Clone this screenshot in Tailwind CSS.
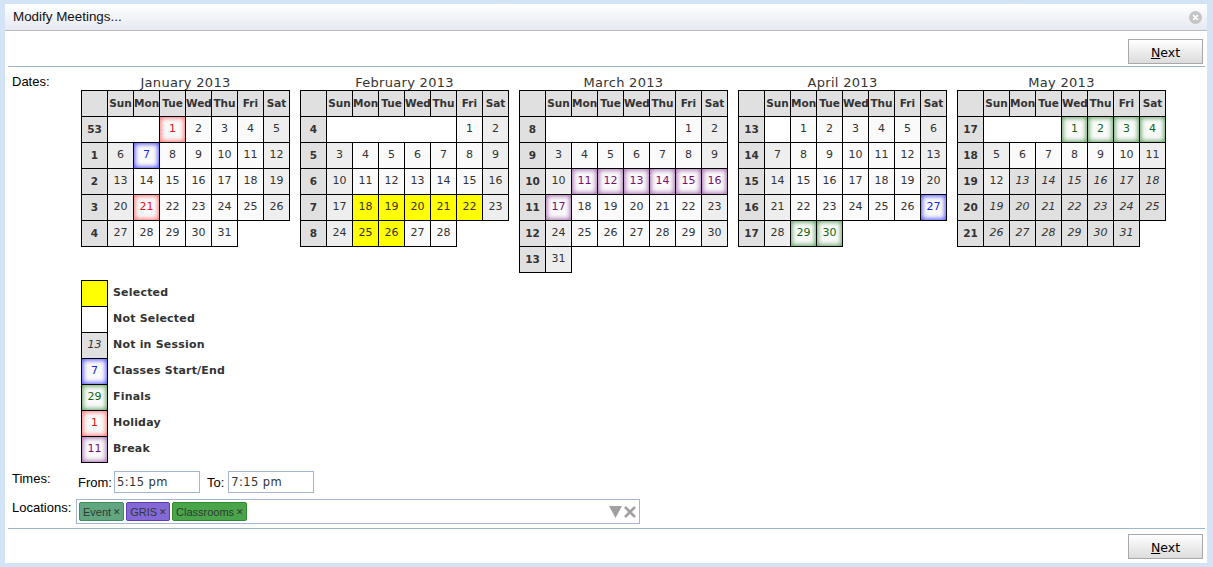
<!DOCTYPE html>
<html lang="en">
<head>
<meta charset="UTF-8" />
<title>Modify Meetings</title>
<script src="https://cdn.jsdelivr.net/npm/@tailwindcss/browser@4"></script>
</head>
<body class="bg-[#d2e4f6] font-['Liberation_Sans',sans-serif] text-[12px] text-black h-[567px] overflow-hidden">
<div class="ml-[5px] mr-[6px] pt-[4px]">
  <div class="bg-white h-[559px] flex flex-col">
    <div class="h-[27px] flex items-center justify-between pl-[8px] pr-[5px] border-b border-[#bcbcbc] bg-gradient-to-b from-white to-[#e6e9f2] text-[13.4px] text-[#111]">
      <span>Modify Meetings...</span>
      <svg class="w-[13px] h-[13px]" viewBox="0 0 13 13"><circle cx="6.5" cy="6.5" r="6.5" fill="#c4c4c4"/><path d="M4.2 4.2l4.6 4.6M8.8 4.2l-4.6 4.6" stroke="#fff" stroke-width="1.8"/></svg>
    </div>
    <div class="flex justify-end h-[36px] items-end pb-[2px] pr-[2px] ml-[3px] mr-[2px] border-b border-[#9db5d3]">
      <button class="w-[75px] h-[25px] pt-[3px] border border-[#a9a9a9] bg-gradient-to-b from-white to-[#dcdcdc] font-['DejaVu_Sans',sans-serif] text-[12.5px] text-black"><u>N</u>ext</button>
    </div>

    <div class="flex pl-[7px] mt-[7px] h-[207px]">
      <div class="w-[69px] text-[13px] leading-[15px] text-black">Dates:</div>
      <div id="calendars" class="flex gap-[10px] font-['DejaVu_Sans',sans-serif] items-start"></div>
    </div>

    <div class="ml-[76px] mt-[-1px] font-['DejaVu_Sans',sans-serif]">
      <table id="legend" class="border-collapse text-[11px] text-[#333]"></table>
    </div>

    <div class="flex pl-[7px] mt-[7px] h-[23px]">
      <div class="w-[66px] pt-[1px] text-[13px] leading-[15px] text-black">Times:</div>
      <div class="flex items-center text-[13px] h-[22px] mt-[1px]">
        <span class="mr-[2px] pt-[2px]">From:</span>
        <input value="5:15 pm" class="w-[86px] h-[22px] border border-[#a3b5d2] px-[2px] font-['DejaVu_Sans',sans-serif] text-[11.5px] tracking-[0.4px] text-[#333]" />
        <span class="ml-[7px] mr-[4px] pt-[2px]">To:</span>
        <input value="7:15 pm" class="w-[86px] h-[22px] border border-[#a3b5d2] px-[2px] font-['DejaVu_Sans',sans-serif] text-[11.5px] tracking-[0.4px] text-[#333]" />
      </div>
    </div>

    <div class="flex pl-[7px] mt-[6px]">
      <div class="w-[64px] pt-[1px] text-[13px] leading-[15px] text-black">Locations:</div>
      <div class="w-[564px] h-[25px] border border-[#a3b5d2] flex items-center gap-[2px] px-[2px] text-[11px] text-[#2f3a33]">
        <span class="h-[19px] pl-[3px] pr-[2px] pt-[1px] flex items-center gap-[2px] rounded-[2px] border border-[#3f8a5f] bg-[#62a581]">Event <span class="text-[9px] pt-[2px]">✕</span></span>
        <span class="h-[19px] pl-[3px] pr-[2px] pt-[1px] flex items-center gap-[2px] rounded-[2px] border border-[#5a40b5] bg-[#8469d6]">GRIS <span class="text-[9px] pt-[2px]">✕</span></span>
        <span class="h-[19px] pl-[3px] pr-[2px] pt-[1px] flex items-center gap-[2px] rounded-[2px] border border-[#2f8a30] bg-[#4aa44a]">Classrooms <span class="text-[9px] pt-[2px]">✕</span></span>
        <span class="ml-auto flex items-center gap-[2px] pr-[1px]">
          <svg class="w-[13px] h-[12px]" viewBox="0 0 13 12"><path d="M0 0h13L6.5 12z" fill="#a0a0a0"/></svg>
          <svg class="w-[12px] h-[12px]" viewBox="0 0 12 12"><path d="M1 1l10 10M11 1L1 11" stroke="#a0a0a0" stroke-width="2.6"/></svg>
        </span>
      </div>
    </div>

    <div class="flex justify-end pt-[5px] pr-[2px] ml-[3px] mr-[2px] mt-[4px] border-t border-[#9db5d3]">
      <button class="w-[75px] h-[25px] pt-[3px] border border-[#a9a9a9] bg-gradient-to-b from-white to-[#dcdcdc] font-['DejaVu_Sans',sans-serif] text-[12.5px] text-black"><u>N</u>ext</button>
    </div>
  </div>
</div>
<script>
const base = 'w-[26px] h-[26px] p-0 border border-black text-center text-[11px] text-[#333] font-normal';
const head = 'w-[26px] h-[26px] p-0 border border-black text-center text-[10.5px] text-[#333] font-bold bg-[#e0e0e0]';
const styles = {
  selected: 'bg-[#ffff00]',
  weekday: 'bg-[#fafafa]',
  weekend: 'bg-[#eeeeee]',
  off: 'bg-[#e0e0e0] italic',
  start: 'bg-[#fafafa] text-[#2222ee] shadow-[inset_0_0_5px_1px_#4a4aff]',
  finals: 'bg-[#fafafa] text-[#116611] shadow-[inset_0_0_5px_1px_#5c9f5c]',
  holiday: 'bg-[#fafafa] text-[#ee1111] shadow-[inset_0_0_5px_1px_#ff7070]',
  brk: 'bg-[#fafafa] text-[#771177] shadow-[inset_0_0_5px_1px_#a466ae]'
};
// marks: day -> kind, per month
const months = [
  { name: 'January 2013', first: 2, days: 31, weeks: [53, 1, 2, 3, 4], marks: { 1: 'holiday', 7: 'start', 21: 'holiday' } },
  { name: 'February 2013', first: 5, days: 28, weeks: [4, 5, 6, 7, 8], marks: { 18: 'selected', 19: 'selected', 20: 'selected', 21: 'selected', 22: 'selected', 25: 'selected', 26: 'selected' } },
  { name: 'March 2013', first: 5, days: 31, weeks: [8, 9, 10, 11, 12, 13], marks: { 11: 'brk', 12: 'brk', 13: 'brk', 14: 'brk', 15: 'brk', 16: 'brk', 17: 'brk' } },
  { name: 'April 2013', first: 1, days: 30, weeks: [13, 14, 15, 16, 17], marks: { 27: 'start', 29: 'finals', 30: 'finals' } },
  { name: 'May 2013', first: 3, days: 31, weeks: [17, 18, 19, 20, 21], marks: { 1: 'finals', 2: 'finals', 3: 'finals', 4: 'finals' }, offFrom: 13 }
];
const names = ['Sun', 'Mon', 'Tue', 'Wed', 'Thu', 'Fri', 'Sat'];

function calendar(m) {
  let html = '<div class="w-[209px]"><div class="text-center text-[13px] leading-[14px] h-[16px] pt-[2px] tracking-[0.3px] text-[#333]">' + m.name + '</div>';
  html += '<table class="border-collapse table-fixed w-[209px]"><tr><th class="' + head + '"></th>';
  names.forEach(n => html += '<th class="' + head + '">' + n + '</th>');
  html += '</tr>';
  let day = 1, w = 0;
  while (day <= m.days) {
    html += '<tr><th class="' + head + '">' + m.weeks[w] + '</th>';
    const start = w === 0 ? m.first : 0;
    if (start > 0) html += '<td colspan="' + start + '" class="p-0 border border-black bg-white"></td>';
    for (let c = start; c < 7 && day <= m.days; c++, day++) {
      let kind = m.marks[day] || (c === 0 || c === 6 ? 'weekend' : 'weekday');
      if (m.offFrom && day >= m.offFrom) kind = 'off';
      html += '<td class="' + base + ' ' + styles[kind] + '">' + day + '</td>';
    }
    html += '</tr>';
    w++;
  }
  return html + '</table></div>';
}
document.getElementById('calendars').innerHTML = months.map(calendar).join('');

const legend = [
  ['selected', '', 'Selected'], ['', '', 'Not Selected'], ['off', '13', 'Not in Session'],
  ['start', '7', 'Classes Start/End'], ['finals', '29', 'Finals'], ['holiday', '1', 'Holiday'], ['brk', '11', 'Break']
];
document.getElementById('legend').innerHTML = legend.map(l =>
  '<tr><td class="' + base + ' ' + (styles[l[0]] || 'bg-white') + '">' + l[1] + '</td>' +
  '<td class="pl-[5px] font-bold tracking-[0.2px]">' + l[2] + '</td></tr>').join('');
</script>
</body>
</html>
